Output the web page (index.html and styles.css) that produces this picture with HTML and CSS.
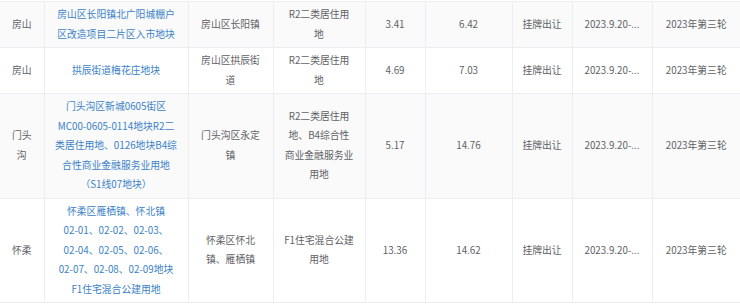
FILE: index.html
```html
<!DOCTYPE html>
<html lang="zh-CN">

<head>
    <meta charset="UTF-8">
    <meta name="viewport" content="width=device-width, initial-scale=1.0">
    <title>供地计划</title>
    <link rel="stylesheet" href="styles.css">
</head>

<body>
    <div class="table-wrap">
        <table class="land-table">
            <colgroup>
                <col class="c-area">
                <col class="c-name">
                <col class="c-place">
                <col class="c-use">
                <col class="c-size">
                <col class="c-floor">
                <col class="c-way">
                <col class="c-date">
                <col class="c-round">
            </colgroup>
            <tbody>
                <tr class="striped">
                    <td>房山</td>
                    <td class="name"><a href="#">房山区长阳镇北广阳城棚户区改造项目二片区入市地块</a></td>
                    <td>房山区长阳镇</td>
                    <td class="use">R2二类居住用地</td>
                    <td>3.41</td>
                    <td>6.42</td>
                    <td>挂牌出让</td>
                    <td class="date" title="2023.9.20-2023.10.19">2023.9.20-...</td>
                    <td>2023年第三轮</td>
                </tr>
                <tr>
                    <td>房山</td>
                    <td class="name"><a href="#">拱辰街道梅花庄地块</a></td>
                    <td>房山区拱辰街道</td>
                    <td class="use">R2二类居住用地</td>
                    <td>4.69</td>
                    <td>7.03</td>
                    <td>挂牌出让</td>
                    <td class="date" title="2023.9.20-2023.10.19">2023.9.20-...</td>
                    <td>2023年第三轮</td>
                </tr>
                <tr class="striped">
                    <td>门头沟</td>
                    <td class="name"><a href="#">门头沟区新城0605街区MC00-0605-0114地块R2二类居住用地、0126地块B4综合性商业金融服务业用地（S1线07地块）</a></td>
                    <td>门头沟区永定镇</td>
                    <td class="use">R2二类居住用地、B4综合性商业金融服务业用地</td>
                    <td>5.17</td>
                    <td>14.76</td>
                    <td>挂牌出让</td>
                    <td class="date" title="2023.9.20-2023.10.19">2023.9.20-...</td>
                    <td>2023年第三轮</td>
                </tr>
                <tr>
                    <td>怀柔</td>
                    <td class="name"><a href="#">怀柔区雁栖镇、怀北镇<br><span class="code">02-01、</span><span class="code">02-02、</span><span class="code">02-03、</span><span class="code">02-04、</span><span class="code">02-05、</span><span class="code">02-06、</span><span class="code">02-07、</span><span class="code">02-08、</span><span class="code">02-09地块</span><br>F1住宅混合公建用地</a></td>
                    <td>怀柔区怀北镇、雁栖镇</td>
                    <td class="use">F1住宅混合公建用地</td>
                    <td>13.36</td>
                    <td>14.62</td>
                    <td>挂牌出让</td>
                    <td class="date" title="2023.9.20-2023.10.19">2023.9.20-...</td>
                    <td>2023年第三轮</td>
                </tr>
            </tbody>
        </table>
    </div>
</body>

</html>
```

FILE: styles.css
```css
body {
    margin: 0;
    background: #fff;
    font-family: "Noto Sans CJK SC", "Noto Sans", sans-serif;
}

.table-wrap {
    padding-top: 1px;
}

.land-table {
    width: 740px;
    table-layout: fixed;
    border-collapse: collapse;
    border-top: 1px solid #ebeef5;
    font-size: 9.8px;
    line-height: 19.5px;
    color: #606266;
}

.c-area { width: 44px; }
.c-name { width: 144px; }
.c-place { width: 85px; }
.c-use { width: 92px; }
.c-size { width: 60px; }
.c-floor { width: 87px; }
.c-way { width: 60px; }
.c-date { width: 80px; }
.c-round { width: 88px; }

.land-table td {
    padding: 3px 8px;
    text-align: center;
    vertical-align: middle;
    border-right: 1px solid #ebeef5;
    border-bottom: 1px solid #ebeef5;
}

.land-table td:last-child {
    border-right: none;
}

.land-table td.name {
    padding: 3px 9.5px;
}

.land-table td.use {
    padding: 3px 10.6px;
}

.land-table td.date {
    white-space: nowrap;
}

.striped td {
    background: #fafafa;
}

.land-table a {
    color: #3a82c8;
    text-decoration: none;
}

.code {
    white-space: nowrap;
}
```
